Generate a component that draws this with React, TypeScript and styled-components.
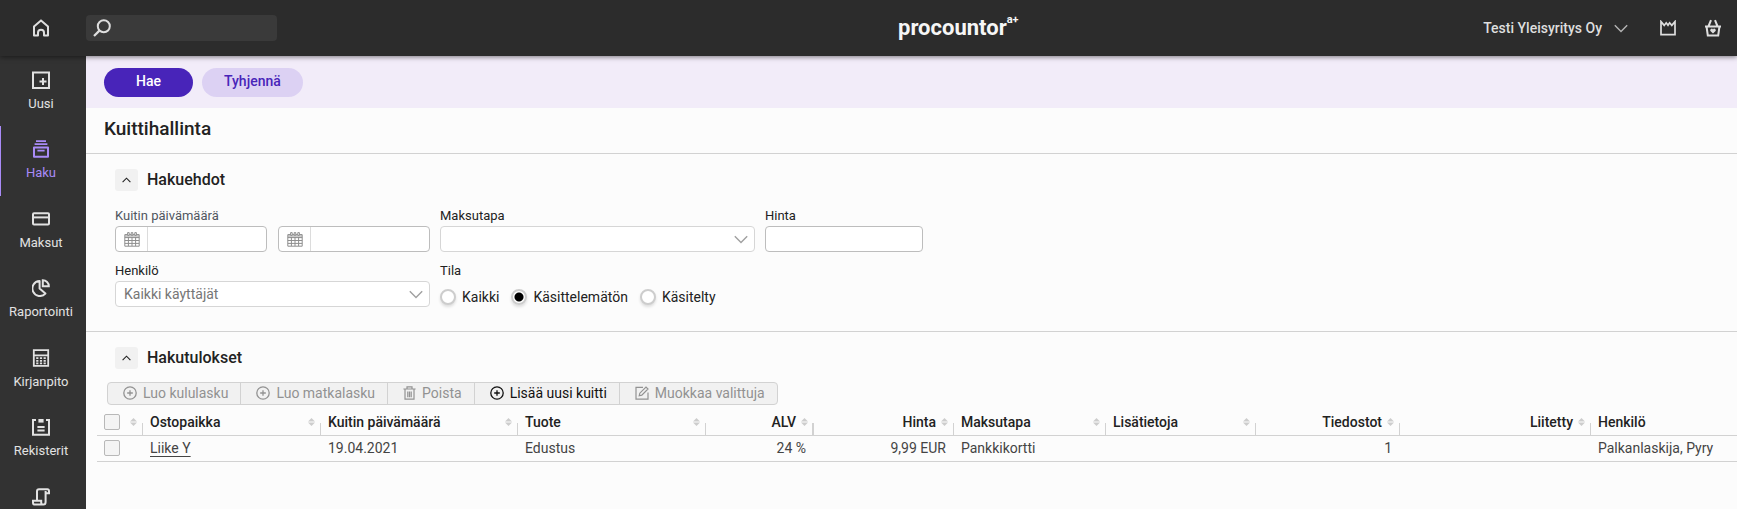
import React from "react";
import styled, { createGlobalStyle, css } from "styled-components";

const FONT = '"Roboto", "Liberation Sans", sans-serif';
const LINE = "#d2d2d2";
const PURPLE = "#4824b9";

const GlobalStyle = createGlobalStyle`
  *, *::before, *::after { box-sizing: border-box; }
  body { margin: 0; background: #fcfcfc; color: #222; font: 400 14px/18px ${FONT}; }
  button, input, select { font: inherit; color: inherit; margin: 0; }
  button { cursor: pointer; }
  svg { display: block; flex: none; }
`;

/* ---------- page frame ---------- */

const Shell = styled.div`
  display: grid;
  grid-template: 56px minmax(0, 1fr) / 86px minmax(0, 1fr);
  height: 100vh;
`;

const TopBar = styled.header`
  grid-column: 1 / -1;
  z-index: 1;
  display: grid;
  grid-template-columns: 5fr auto 4fr;
  align-items: center;
  background: #2c2c2c;
  color: #dedede;
  box-shadow: 0 1px 5px rgba(0, 0, 0, 0.5);
`;

const TopLeft = styled.div`
  display: flex;
  align-items: center;
`;

const TopRight = styled.div`
  display: flex;
  align-items: center;
  justify-content: flex-end;
  padding-right: 15px;
`;

const HomeLink = styled.a`
  display: flex;
  justify-content: center;
  width: 86px;
  padding-right: 4px;
  color: inherit;
`;

const SearchBox = styled.label`
  display: flex;
  align-items: center;
  width: 191px;
  height: 26px;
  padding-left: 7px;
  border-radius: 4px;
  background: #3a3a3a;
`;

const SearchInput = styled.input`
  flex: 1;
  min-width: 0;
  padding: 0 8px;
  border: 0;
  outline: 0;
  background: transparent;
`;

const Brand = styled.a`
  display: flex;
  align-items: flex-start;
  color: #f6f6f6;
  font: 700 22px/28px ${FONT};
  text-decoration: none;
`;

const BrandMark = styled.sup`
  font: 700 11px/12px ${FONT};
`;

const CompanyButton = styled.button`
  display: flex;
  align-items: center;
  gap: 12px;
  padding: 0 4px 0 0;
  border: 0;
  background: none;
  font-weight: 500;

  & > svg {
    color: #b4b4b4;
  }
`;

const IconButton = styled.button`
  display: flex;
  padding: 0;
  margin-left: 28px;
  border: 0;
  background: none;
`;

const SideNav = styled.nav`
  padding-top: 1px;
  overflow: hidden;
  background: #323232;
`;

const NavLink = styled.a<{ $active?: boolean }>`
  display: flex;
  flex-direction: column;
  align-items: center;
  gap: 6px;
  height: 69px;
  padding: 14px 4px 0 0;
  box-shadow: ${(p) => (p.$active ? "inset 1px 0 #a98bf7" : "none")};
  color: ${(p) => (p.$active ? "#a98bf7" : "#e2e2e2")};
  font-size: 13px;
  text-decoration: none;

  &:nth-child(even) {
    height: 70px;
  }
`;

const Main = styled.main`
  overflow: auto;
`;

/* ---------- page header ---------- */

const ActionBar = styled.div`
  display: flex;
  gap: 9px;
  padding: 12px 18px 11px;
  background: #f2ecf9;
`;

const Pill = styled.button<{ $primary?: boolean }>`
  height: 29px;
  padding: 0 ${(p) => (p.$primary ? 32 : 22)}px 3px;
  border: 0;
  border-radius: 15px;
  background: ${(p) => (p.$primary ? PURPLE : "#dcd1f3")};
  color: ${(p) => (p.$primary ? "#fff" : PURPLE)};
  font-weight: 500;
`;

const Title = styled.h1`
  margin: 0;
  padding: 9px 18px 12px;
  border-bottom: 1px solid ${LINE};
  font: 500 19px/24px ${FONT};
`;

/* ---------- sections ---------- */

const SearchSection = styled.section`
  padding: 15px 29px 18px;
  border-bottom: 1px solid ${LINE};
`;

const ResultSection = styled.section`
  padding-top: 15px;
`;

const SectionHead = styled.div<{ $inset?: boolean }>`
  display: flex;
  align-items: center;
  gap: 9px;
  padding-left: ${(p) => (p.$inset ? 29 : 0)}px;
`;

const Heading = styled.h2`
  margin: 0;
  font: 500 16px/22px ${FONT};
`;

const Collapse = styled.button`
  display: grid;
  place-items: center;
  width: 23px;
  height: 22px;
  padding: 0;
  border: 0;
  border-radius: 3px;
  background: #f1f1f1;
`;

/* ---------- form ---------- */

const FormGrid = styled.form`
  display: grid;
  grid-template-columns: 315px 315px 158px;
  gap: 11px 10px;
  margin-top: 17px;
`;

const Field = styled.div`
  display: flex;
  flex-direction: column;
  gap: 2px;
`;

const labelText = css`
  font-size: 13px;
  line-height: 16px;
`;

const FieldLabel = styled.label`
  ${labelText}
`;

const Group = styled.fieldset`
  min-width: 0;
  margin: 0;
  padding: 0;
  border: 0;
`;

const Legend = styled.legend<{ $soft?: boolean }>`
  ${labelText}
  margin-bottom: 2px;
  padding: 0;
  color: ${(p) => (p.$soft ? "#505660" : "inherit")};
`;

const DateRow = styled.div`
  display: grid;
  grid-template-columns: repeat(2, minmax(0, 1fr));
  gap: 11px;
`;

const DateBox = styled.label`
  display: flex;
  height: 26px;
  border: 1px solid #bdbdbd;
  border-radius: 4px;
  background: #fff;
  color: #8f8f8f;
`;

const DateIcon = styled.span`
  display: grid;
  place-items: center;
  flex: none;
  width: 32px;
  border-right: 1px solid #dcdcdc;
`;

const DateInput = styled.input`
  flex: 1;
  min-width: 0;
  padding: 0 8px;
  border: 0;
  outline: 0;
  background: none;
`;

const TextInput = styled.input`
  width: 100%;
  height: 26px;
  padding: 0 9px;
  border: 1px solid #bdbdbd;
  border-radius: 4px;
  background: #fff;
`;

const SelectBox = styled.div`
  display: grid;
  align-items: center;
  color: #a0a0a0;

  & > * {
    grid-area: 1 / 1;
  }

  & > svg {
    justify-self: end;
    margin-right: 7px;
    pointer-events: none;
  }
`;

const Select = styled.select`
  appearance: none;
  width: 100%;
  height: 26px;
  padding: 0 30px 0 8px;
  border: 1px solid #d6d6d6;
  border-radius: 4px;
  background: #fff;
  color: #767676;
`;

const RadioRow = styled.div`
  display: flex;
  align-items: center;
  gap: 12px;
  height: 32px;
`;

const RadioLabel = styled.label`
  display: flex;
  align-items: center;
  gap: 6px;
`;

const Radio = styled.input`
  appearance: none;
  width: 16px;
  height: 16px;
  border: 2px solid #cdcdcd;
  border-radius: 50%;
  background: #fff;
  box-shadow: 0 2px 3px rgba(0, 0, 0, 0.12);

  &:checked {
    background: radial-gradient(circle, #000 4px, #fff 5px);
  }
`;

/* ---------- results ---------- */

const Toolbar = styled.div`
  display: flex;
  width: max-content;
  margin: 13px 0 0 21px;
  border: 1px solid ${LINE};
  border-radius: 4px;
  background: #f1f1f1;
`;

const ToolButton = styled.button`
  display: flex;
  align-items: center;
  gap: 6px;
  height: 21px;
  padding: 0 12px 2px 15px;
  border: 0;
  border-right: 1px solid ${LINE};
  background: none;
  color: #111;

  &:last-child {
    border-right: 0;
  }

  &:disabled {
    color: #929292;
  }
`;

const TableArea = styled.div`
  margin-left: 11px;
  overflow-x: auto;
`;

const Table = styled.table`
  width: 100%;
  min-width: 1640px;
  table-layout: fixed;
  border-collapse: separate;
  border-spacing: 0;
`;

const HeadCell = styled.th<{ $wide?: boolean }>`
  height: 31px;
  padding: 3px 6px 0 7px;
  border-bottom: 1px solid ${LINE};
  background: linear-gradient(${LINE}, ${LINE}) right bottom / ${(p) => (p.$wide ? 2 : 1)}px 12px no-repeat;
  font-weight: 500;
  text-align: left;

  &:last-child {
    background: none;
  }
`;

const HeadContent = styled.div<{ $end?: boolean }>`
  display: flex;
  align-items: center;
  justify-content: ${(p) => (p.$end ? "flex-end" : "space-between")};
  gap: 5px;
`;

const Cell = styled.td<{ $end?: boolean }>`
  height: 26px;
  padding: 0 8px 1px 7px;
  border-bottom: 1px solid ${LINE};
  color: #444;
  text-align: ${(p) => (p.$end ? "right" : "left")};
`;

const ReceiptLink = styled.a`
  color: #444;
  text-decoration: underline;
  text-underline-offset: 3px;
`;

const Tick = styled.input`
  appearance: none;
  display: block;
  width: 16px;
  height: 16px;
  border: 1px solid #b8b8b8;
  border-radius: 2px;
  background: #f4f4f4;
`;

/* ---------- icons ---------- */

type IconProps = { w: number; h: number; sw?: number; children: React.ReactNode };

const Icon = ({ w, h, sw = 2, children }: IconProps) => (
  <svg width={w} height={h} viewBox={`0 0 ${w} ${h}`} fill="none" stroke="currentColor" strokeWidth={sw} aria-hidden="true">
    {children}
  </svg>
);

const HomeIcon = () => (
  <Icon w={18} h={18} sw={2}>
    <path d="M2 7.4 9 1.4l7 6V16.4h-4v-2.6a3 3 0 0 0-6 0v2.6H2z" strokeLinejoin="round" />
  </Icon>
);

const SearchIcon = () => (
  <Icon w={18} h={18} sw={2}>
    <circle cx="10.8" cy="7.2" r="6" />
    <path d="M6.4 11.6 1 17" strokeWidth="2.2" />
  </Icon>
);

const Chevron = () => (
  <Icon w={14} h={9} sw={1.4}>
    <path d="M.8 1.2 7 7.6 13.2 1.2" />
  </Icon>
);

const CaretUp = () => (
  <Icon w={9} h={6} sw={1.1}>
    <path d="M.6 5.2 4.5 1.2 8.4 5.2" />
  </Icon>
);

const CrownIcon = () => (
  <Icon w={16} h={16} sw={1.7}>
    <path d="M1 1.6v13h14v-13l-3.2 3.8L9.6 2.8 8 5.2 6.2 2.8 4.2 5.4z" />
  </Icon>
);

const BasketIcon = () => (
  <Icon w={18} h={18} sw={2}>
    <path d="M1 7.4h16M2.6 8l1.2 8.4h10.4L15.4 8M4.6 7 7 1.2M13.4 7 11 1.2" />
    <path d="M9 14.6 6.4 12a1.4 1.4 0 0 1 2.6-1.6 1.4 1.4 0 0 1 2.6 1.6z" fill="currentColor" stroke="none" />
  </Icon>
);

const NewIcon = () => (
  <Icon w={18} h={18}>
    <path d="M1 1.5h16v15.5H1zM11 7v7M7.5 10.5h7" />
  </Icon>
);

const StackIcon = () => (
  <Icon w={18} h={18} sw={2}>
    <path d="M4 1.2h10M2.6 4.2h12.8M5.4 10.6h7.2" strokeWidth="1.8" />
    <path d="M2 7.4h14v9.4H2z" strokeLinejoin="round" />
  </Icon>
);

const CardIcon = () => (
  <Icon w={18} h={18} sw={2}>
    <rect x="1" y="3.2" width="16" height="11.4" rx="1" />
    <path d="M1 7.4h16" />
  </Icon>
);

const PieIcon = () => (
  <Icon w={18} h={18}>
    <path d="M7.6 2A7.5 7.5 0 1 0 13.4 14.6L7.6 9.6z" strokeLinejoin="round" />
    <path d="M10.8 1.2a6 6 0 0 1 6 6h-6z" />
  </Icon>
);

const CalculatorIcon = () => (
  <Icon w={18} h={18} sw={1.8}>
    <path d="M1.8 1.2h14.4v15.6H1.8zM2 6.4h14" />
    <path d="M4.2 9.2h2.2M7.9 9.2h2.2M11.6 9.2h2.2M4.2 11.8h2.2M7.9 11.8h2.2M11.6 11.8h2.2M4.2 14.4h2.2M7.9 14.4h2.2M11.6 14.4h2.2" />
  </Icon>
);

const RegisterIcon = () => (
  <Icon w={18} h={18} sw={2}>
    <path d="M4 2H1v14.8h16V2h-3M5.4 9h7.2M5.4 12.4h7.2" />
    <path d="M6.4 1h5.2v3.6H6.4z" fill="currentColor" stroke="none" />
  </Icon>
);

const ScrollIcon = () => (
  <Icon w={18} h={18} sw={2}>
    <path d="M5 12.4V3.2C5 1.8 5.8 1.2 7 1.2h8.4c1 0 1.6.8 1.6 2v2h-3.6M13.6 3v11c0 1.6-.8 2.6-2.2 2.6H3.2c-1.4 0-2.2-1-2.2-2.2v-1.6h8.2v1.6c0 1.2.8 2.2 2.2 2.2" />
  </Icon>
);

const CalendarIcon = () => (
  <Icon w={16} h={15} sw={1}>
    <path d="M.8 2.6h14.4v11.6H.8zM.8 5.6h14.4M.8 8.5h14.4M.8 11.4h14.4M4.4 5v9M8 5v9M11.6 5v9" />
    <path d="M1 2.4h14v3H1z" fill="currentColor" stroke="none" opacity=".45" />
    <path d="M3.6.6h1.6v2.8H3.6zM7.2.6h1.6v2.8H7.2zM10.8.6h1.6v2.8h-1.6z" fill="#fff" />
  </Icon>
);

const PlusCircle = () => (
  <Icon w={14} h={14} sw={1.3}>
    <circle cx="7" cy="7" r="6.2" />
    <path d="M7 4.2v5.6M4.2 7h5.6" />
  </Icon>
);

const TrashIcon = () => (
  <Icon w={13} h={14} sw={1.2}>
    <path d="M.4 3h12.2M4 2.6V.8h5v1.8M2 3.2v10h9v-10M4.8 5.4v5.8M6.5 5.4v5.8M8.2 5.4v5.8" />
  </Icon>
);

const EditIcon = () => (
  <Icon w={14} h={14} sw={1.2}>
    <path d="M8 1.4H1v11.8h12V6.4M4.2 9.8l.6-2.6L11 1l2 2-6.2 6.2z" />
  </Icon>
);

const SortIcon = () => (
  <svg width="7" height="8" viewBox="0 0 7 8" fill="#cdcdcd" aria-hidden="true">
    <path d="M3.5 0 7 3.4H0zM3.5 8 0 4.6h7z" />
  </svg>
);

/* ---------- data ---------- */

const navItems = [
  { label: "Uusi", icon: <NewIcon /> },
  { label: "Haku", icon: <StackIcon />, active: true },
  { label: "Maksut", icon: <CardIcon /> },
  { label: "Raportointi", icon: <PieIcon /> },
  { label: "Kirjanpito", icon: <CalculatorIcon /> },
  { label: "Rekisterit", icon: <RegisterIcon /> },
  { label: "", icon: <ScrollIcon /> },
];

const tools = [
  { label: "Luo kululasku", icon: <PlusCircle />, disabled: true },
  { label: "Luo matkalasku", icon: <PlusCircle />, disabled: true },
  { label: "Poista", icon: <TrashIcon />, disabled: true },
  { label: "Lisää uusi kuitti", icon: <PlusCircle />, disabled: false },
  { label: "Muokkaa valittuja", icon: <EditIcon />, disabled: true },
];

const columns = [
  { label: "Ostopaikka", width: 178, value: "Liike Y", link: true },
  { label: "Kuitin päivämäärä", width: 197, value: "19.04.2021" },
  { label: "Tuote", width: 188, value: "Edustus" },
  { label: "ALV", width: 108, value: "24 %", end: true, wide: true },
  { label: "Hinta", width: 140, value: "9,99 EUR", end: true },
  { label: "Maksutapa", width: 152, value: "Pankkikortti" },
  { label: "Lisätietoja", width: 150, value: "" },
  { label: "Tiedostot", width: 144, value: "1", end: true },
  { label: "Liitetty", width: 191, value: "", end: true },
  { label: "Henkilö", value: "Palkanlaskija, Pyry", unsorted: true },
];

export default function App() {
  return (
    <>
      <GlobalStyle />
      <Shell>
        <TopBar>
          <TopLeft>
            <HomeLink href="#" aria-label="Etusivu">
              <HomeIcon />
            </HomeLink>
            <SearchBox>
              <SearchIcon />
              <SearchInput type="search" aria-label="Haku" />
            </SearchBox>
          </TopLeft>
          <Brand href="#">
            procountor<BrandMark>a+</BrandMark>
          </Brand>
          <TopRight>
            <CompanyButton>
              Testi Yleisyritys Oy
              <Chevron />
            </CompanyButton>
            <IconButton aria-label="Edut">
              <CrownIcon />
            </IconButton>
            <IconButton aria-label="Ostoskori">
              <BasketIcon />
            </IconButton>
          </TopRight>
        </TopBar>

        <SideNav>
          {navItems.map((item, i) => (
            <NavLink key={i} href="#" $active={item.active} aria-label={item.label || "Työkalut"}>
              {item.icon}
              {item.label}
            </NavLink>
          ))}
        </SideNav>

        <Main>
          <ActionBar>
            <Pill $primary>Hae</Pill>
            <Pill>Tyhjennä</Pill>
          </ActionBar>
          <Title>Kuittihallinta</Title>

          <SearchSection>
            <SectionHead>
              <Collapse aria-label="Piilota hakuehdot">
                <CaretUp />
              </Collapse>
              <Heading>Hakuehdot</Heading>
            </SectionHead>
            <FormGrid>
              <Group>
                <Legend $soft>Kuitin päivämäärä</Legend>
                <DateRow>
                  {["Alkaen", "Päättyen"].map((name) => (
                    <DateBox key={name}>
                      <DateIcon>
                        <CalendarIcon />
                      </DateIcon>
                      <DateInput aria-label={name} />
                    </DateBox>
                  ))}
                </DateRow>
              </Group>
              <Field>
                <FieldLabel htmlFor="method">Maksutapa</FieldLabel>
                <SelectBox>
                  <Select id="method" defaultValue="">
                    <option value="" />
                  </Select>
                  <Chevron />
                </SelectBox>
              </Field>
              <Field>
                <FieldLabel htmlFor="price">Hinta</FieldLabel>
                <TextInput id="price" />
              </Field>
              <Field>
                <FieldLabel htmlFor="person">Henkilö</FieldLabel>
                <SelectBox>
                  <Select id="person">
                    <option>Kaikki käyttäjät</option>
                  </Select>
                  <Chevron />
                </SelectBox>
              </Field>
              <Group>
                <Legend>Tila</Legend>
                <RadioRow>
                  {["Kaikki", "Käsittelemätön", "Käsitelty"].map((name, i) => (
                    <RadioLabel key={name}>
                      <Radio type="radio" name="state" defaultChecked={i === 1} />
                      {name}
                    </RadioLabel>
                  ))}
                </RadioRow>
              </Group>
            </FormGrid>
          </SearchSection>

          <ResultSection>
            <SectionHead $inset>
              <Collapse aria-label="Piilota hakutulokset">
                <CaretUp />
              </Collapse>
              <Heading>Hakutulokset</Heading>
            </SectionHead>
            <Toolbar>
              {tools.map((tool) => (
                <ToolButton key={tool.label} disabled={tool.disabled}>
                  {tool.icon}
                  {tool.label}
                </ToolButton>
              ))}
            </Toolbar>
            <TableArea>
              <Table>
                <colgroup>
                  <col width={46} />
                  {columns.map((c) => (
                    <col key={c.label} width={c.width} />
                  ))}
                </colgroup>
                <thead>
                  <tr>
                    <HeadCell>
                      <HeadContent>
                        <Tick type="checkbox" aria-label="Valitse kaikki" />
                        <SortIcon />
                      </HeadContent>
                    </HeadCell>
                    {columns.map((c) => (
                      <HeadCell key={c.label} $wide={c.wide}>
                        <HeadContent $end={c.end}>
                          {c.label}
                          {!c.unsorted && <SortIcon />}
                        </HeadContent>
                      </HeadCell>
                    ))}
                  </tr>
                </thead>
                <tbody>
                  <tr>
                    <Cell>
                      <Tick type="checkbox" aria-label="Valitse rivi" />
                    </Cell>
                    {columns.map((c) => (
                      <Cell key={c.label} $end={c.end}>
                        {c.link ? <ReceiptLink href="#">{c.value}</ReceiptLink> : c.value}
                      </Cell>
                    ))}
                  </tr>
                </tbody>
              </Table>
            </TableArea>
          </ResultSection>
        </Main>
      </Shell>
    </>
  );
}
